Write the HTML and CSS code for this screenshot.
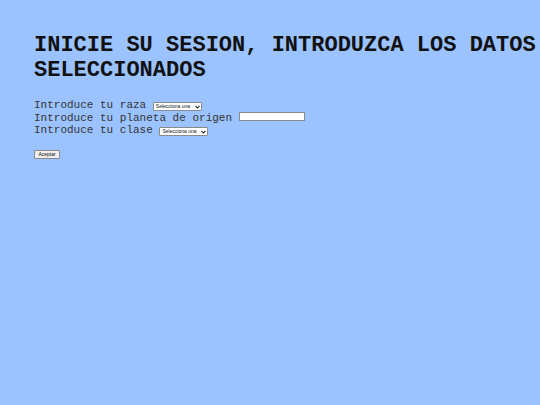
FILE: index.html
```html
<!DOCTYPE html>
<html lang="es">
<head>
<meta charset="utf-8">
<title>Inicio de sesión</title>
<link rel="stylesheet" href="styles.css">
</head>
<body>
<main class="page">
  <h1 class="title">INICIE SU SESION, INTRODUZCA LOS DATOS SELECCIONADOS</h1>
  <form class="form">
    <div class="row">Introduce tu raza <span class="selwrap"><select class="sel"><option>Selecciona una</option></select><svg class="chev" width="5" height="4" viewBox="0 0 5 4"><path d="M0.5 0.8 L2.5 3 L4.5 0.8" fill="none" stroke="#222" stroke-width="1.1"/></svg></span></div>
    <div class="row">Introduce tu planeta de origen <input class="txt" type="text"></div>
    <div class="row">Introduce tu clase <span class="selwrap"><select class="sel"><option>Selecciona una</option></select><svg class="chev" width="5" height="4" viewBox="0 0 5 4"><path d="M0.5 0.8 L2.5 3 L4.5 0.8" fill="none" stroke="#222" stroke-width="1.1"/></svg></span></div>
    <div class="actions"><button class="btn" type="button">Aceptar</button></div>
  </form>
</main>
</body>
</html>
```
FILE: styles.css
```css
html, body {
  margin: 0;
  padding: 0;
  background: #9bc3ff;
}
.page {
  padding: 33px 0 0 34px;
  font-family: "Liberation Mono", monospace;
  color: #000;
}
.title {
  margin: 0 0 16px 0;
  font-size: 22px;
  line-height: 25px;
  font-weight: bold;
  color: #111;
}
.form {
  margin: 0;
}
.row {
  font-size: 11px;
  line-height: 12.5px;
  color: #333;
}
.selwrap {
  position: relative;
  display: inline-block;
  vertical-align: 0;
  line-height: 0;
}
.sel {
  appearance: none;
  -webkit-appearance: none;
  font-family: "Liberation Sans", Arial, sans-serif;
  font-size: 5px;
  line-height: 7px;
  height: 9px;
  width: 49px;
  box-sizing: border-box;
  padding: 0 0 0 2px;
  margin: 0;
  border: 1px solid #8a8a8a;
  border-radius: 1px;
  background: #fff;
  color: #111;
}
.chev {
  position: absolute;
  right: 2px;
  top: 3px;
}
.txt {
  width: 66px;
  height: 9px;
  box-sizing: border-box;
  padding: 0;
  margin: 0;
  border: 1px solid #8a8a8a;
  background: #fff;
  vertical-align: 0;
}
.actions {
  margin-top: 13px;
  line-height: 0;
}
.btn {
  font-family: "Liberation Sans", Arial, sans-serif;
  font-size: 5px;
  height: 9px;
  width: 26px;
  padding: 0;
  margin: 0;
  border: 1px solid #8a8a8a;
  border-radius: 1px;
  background: #efefef;
  color: #111;
  line-height: 1;
}
```
